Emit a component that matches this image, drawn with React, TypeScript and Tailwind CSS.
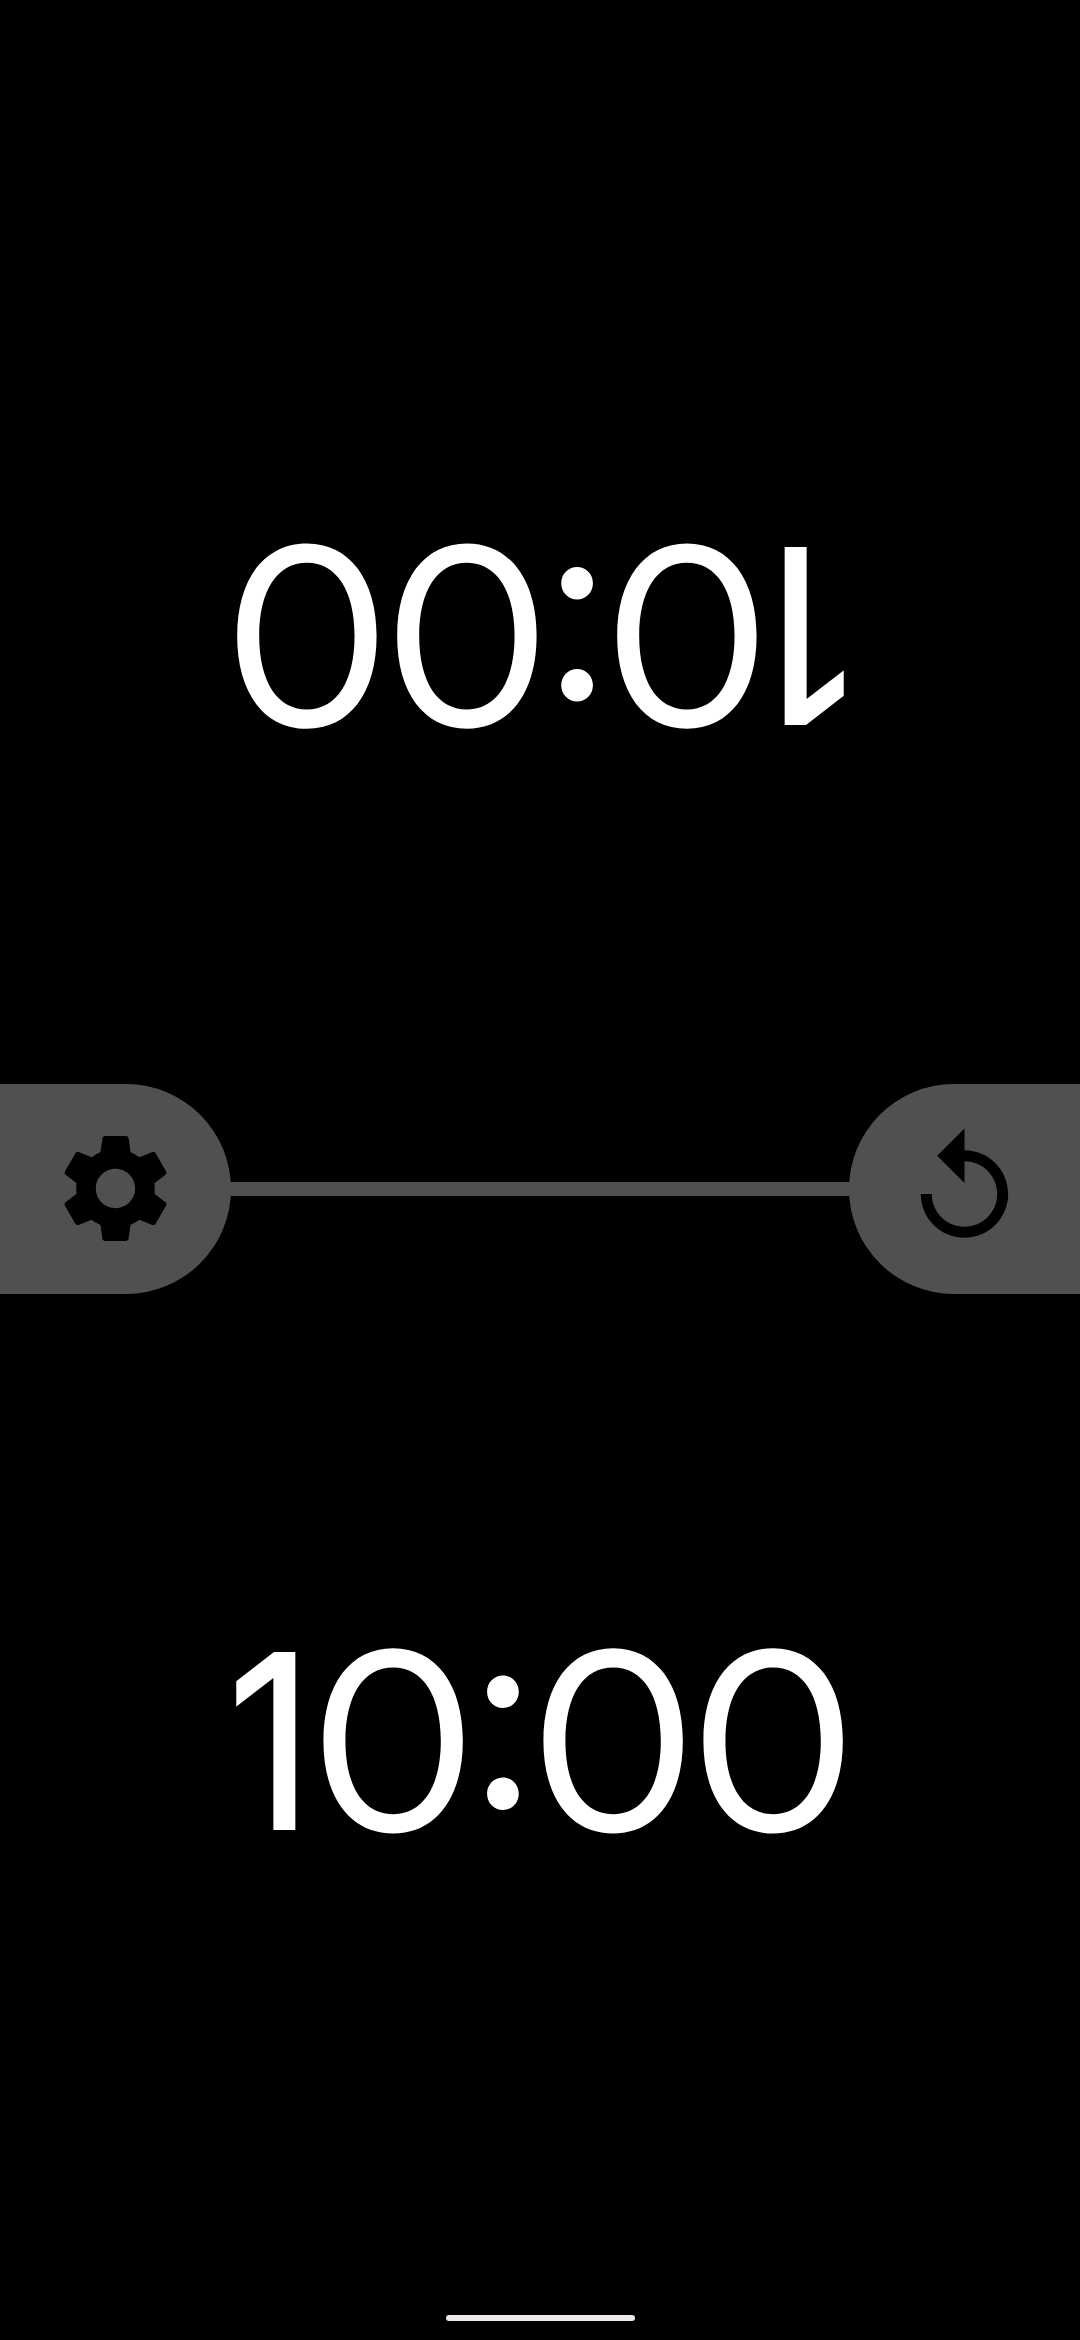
import { MdReplay, MdSettings } from "react-icons/md";

const GLYPHS = [
  { char: "1", cell: "w-[79px]", glyph: "font-medium scale-x-[0.85]" },
  { char: "0", cell: "w-[167px]", glyph: "scale-x-[1.083] scale-y-[1.007]" },
  { char: ":", cell: "w-[52px]", glyph: "-translate-y-[30px] scale-x-[1.06] scale-y-[1.087]" },
  { char: "0", cell: "w-[168px]", glyph: "scale-x-[1.083] scale-y-[1.007]" },
  { char: "0", cell: "w-[152px]", glyph: "scale-x-[1.083] scale-y-[1.007]" },
];

function Clock({ flipped = false }: { flipped?: boolean }) {
  return (
    <div
      className={`flex font-['Inter_Display','Inter',sans-serif] text-[245px] leading-none text-white ${
        flipped ? "rotate-180" : ""
      }`}
    >
      {GLYPHS.map(({ char, cell, glyph }, i) => (
        <span key={i} className={`flex justify-center ${cell}`}>
          <span className={`block shrink-0 ${glyph}`}>{char}</span>
        </span>
      ))}
    </div>
  );
}

export default function App() {
  return (
    <main className="flex h-[2340px] w-[1080px] flex-col overflow-hidden bg-black">
      <section className="flex h-[1084px] items-center justify-center pt-[187px]">
        <Clock flipped />
      </section>

      <nav className="flex h-[210px] items-center">
        <button
          aria-label="Settings"
          className="flex h-full w-[231px] items-center justify-center rounded-r-full bg-[#505050] pb-[2px] text-black"
        >
          <MdSettings className="size-[131px]" />
        </button>
        <div className="-mx-1 h-[14px] flex-1 bg-[#505050]" />
        <button
          aria-label="Reset"
          className="flex h-full w-[231px] items-center justify-center rounded-l-full bg-[#505050] pb-[2px] text-black"
        >
          <MdReplay className="size-[131px]" />
        </button>
      </nav>

      <section className="flex flex-1 items-center justify-center pb-[126px]">
        <Clock />
      </section>

      <footer className="flex h-[25px] shrink-0 justify-center">
        <div className="h-[6px] w-[189px] rounded-full bg-[#ebe7eb]" />
      </footer>
    </main>
  );
}
